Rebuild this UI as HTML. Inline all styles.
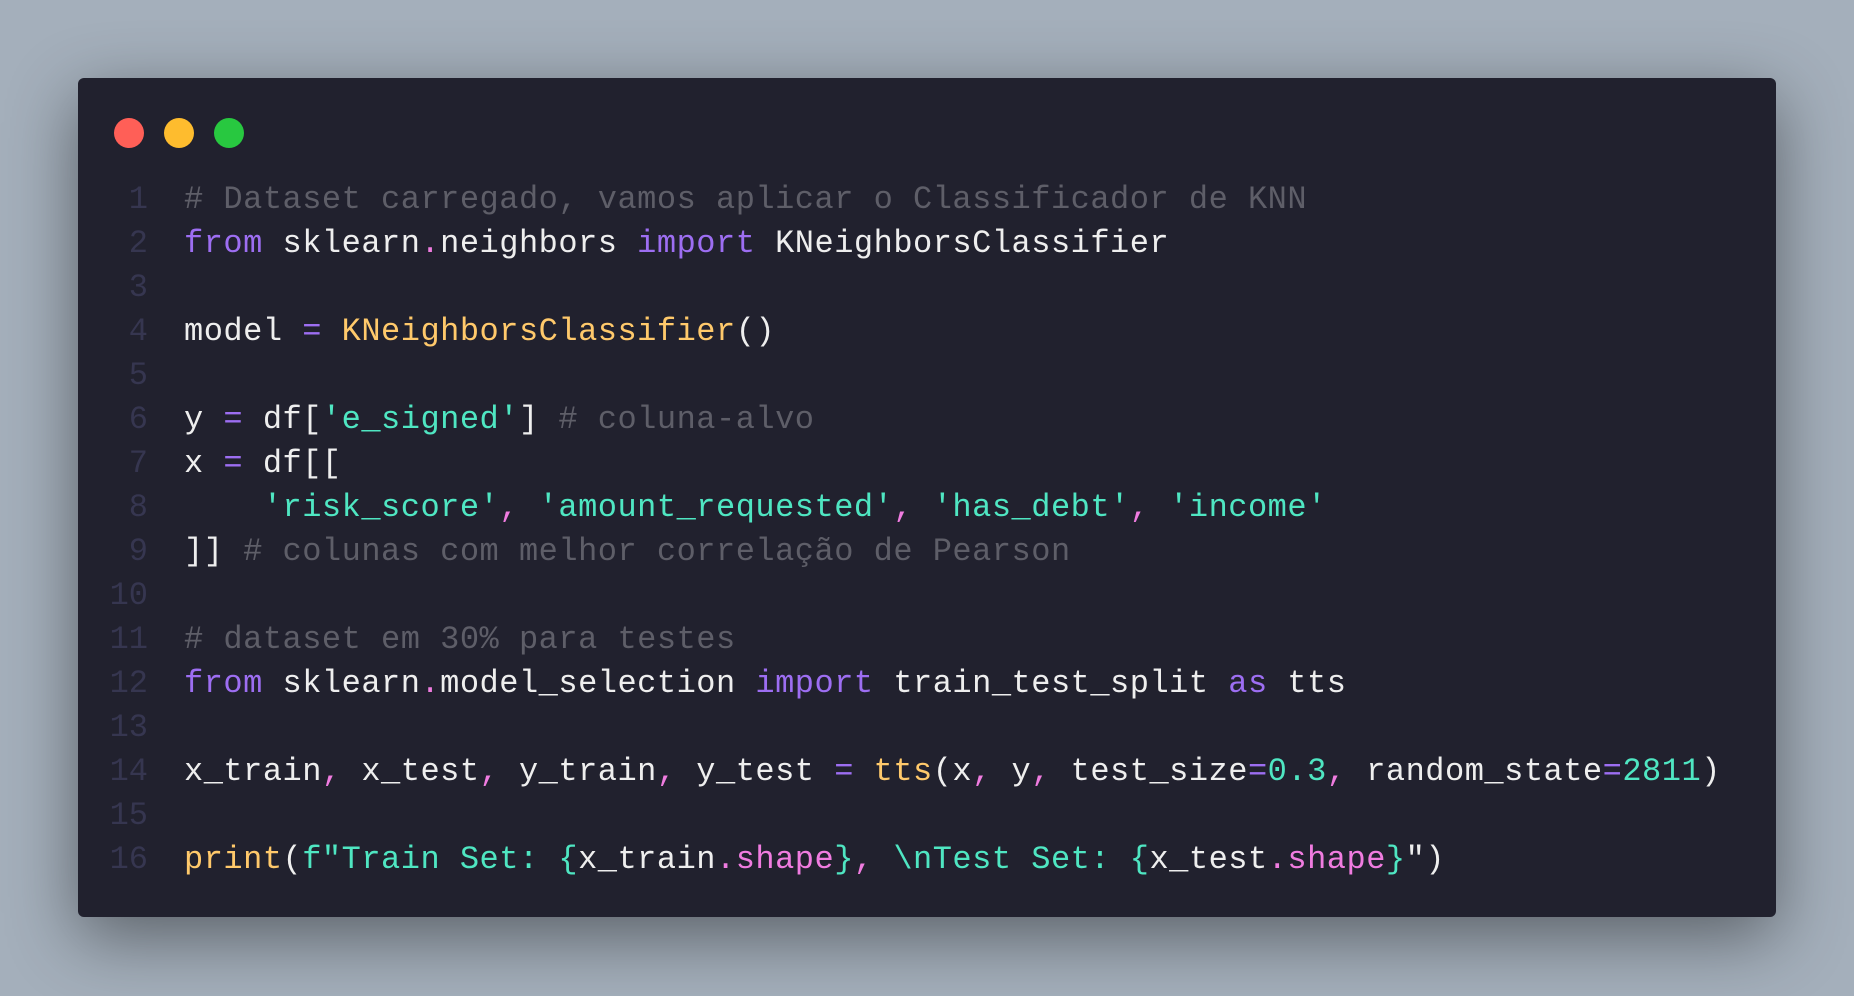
<!DOCTYPE html>
<html><head><meta charset="utf-8"><style>
html,body{margin:0;padding:0;}
body{width:1854px;height:996px;background:#a4afbb;position:relative;overflow:hidden;}
.win{position:absolute;left:78px;top:78px;width:1698px;height:839px;background:#21212e;border-radius:6px;box-shadow:0 20px 70px rgba(0,0,0,0.45);}
.dot{position:absolute;top:118px;width:30px;height:30px;border-radius:50%;}
.code{position:absolute;left:0;top:178px;font-family:"Liberation Mono",monospace;font-size:32px;line-height:44px;letter-spacing:0.5px;color:#eeeeee;white-space:pre;}
.ln{display:inline-block;width:148px;text-align:right;color:#363650;margin-right:36px;letter-spacing:0;}
.c{color:#5e5e68}.k{color:#9d6ef2}.p{color:#f07ce0}.s{color:#4fe6c2}.f{color:#ffc96b}
</style></head><body>
<div class="win"></div>
<div class="dot" style="left:114px;background:#ff5f57"></div>
<div class="dot" style="left:164px;background:#febc2e"></div>
<div class="dot" style="left:214px;background:#28c840"></div>
<div class="code"><div><span class="ln">1</span><span class="c"># Dataset carregado, vamos aplicar o Classificador de KNN</span></div><div><span class="ln">2</span><span class="k">from</span> sklearn<span class="p">.</span>neighbors <span class="k">import</span> KNeighborsClassifier</div><div><span class="ln">3</span></div><div><span class="ln">4</span>model <span class="k">=</span> <span class="f">KNeighborsClassifier</span>()</div><div><span class="ln">5</span></div><div><span class="ln">6</span>y <span class="k">=</span> df[<span class="s">'e_signed'</span>] <span class="c"># coluna-alvo</span></div><div><span class="ln">7</span>x <span class="k">=</span> df[[</div><div><span class="ln">8</span>    <span class="s">'risk_score'</span><span class="p">,</span> <span class="s">'amount_requested'</span><span class="p">,</span> <span class="s">'has_debt'</span><span class="p">,</span> <span class="s">'income'</span></div><div><span class="ln">9</span>]] <span class="c"># colunas com melhor correlação de Pearson</span></div><div><span class="ln">10</span></div><div><span class="ln">11</span><span class="c"># dataset em 30% para testes</span></div><div><span class="ln">12</span><span class="k">from</span> sklearn<span class="p">.</span>model_selection <span class="k">import</span> train_test_split <span class="k">as</span> tts</div><div><span class="ln">13</span></div><div><span class="ln">14</span>x_train<span class="p">,</span> x_test<span class="p">,</span> y_train<span class="p">,</span> y_test <span class="k">=</span> <span class="f">tts</span>(x<span class="p">,</span> y<span class="p">,</span> test_size<span class="k">=</span><span class="s">0.3</span><span class="p">,</span> random_state<span class="k">=</span><span class="s">2811</span>)</div><div><span class="ln">15</span></div><div><span class="ln">16</span><span class="f">print</span>(<span class="s">f"Train Set: {</span>x_train<span class="p">.shape</span><span class="s">}</span><span class="p">,</span> <span class="s">\nTest Set: {</span>x_test<span class="p">.shape</span><span class="s">}</span>")</div></div>
</body></html>
